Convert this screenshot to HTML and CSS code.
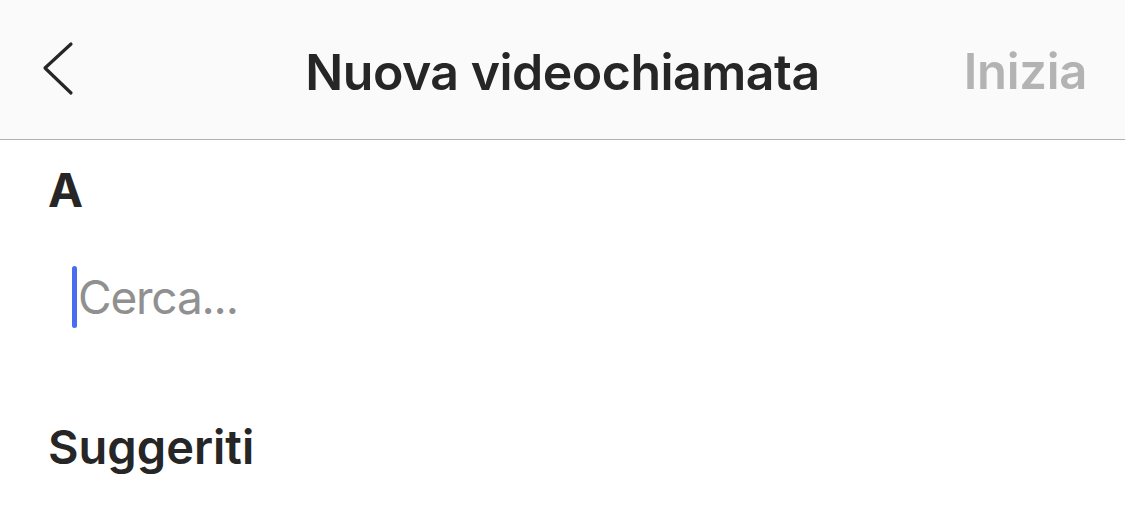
FILE: index.html
```html
<!DOCTYPE html>
<html lang="it">
<head>
    <meta charset="UTF-8">
    <meta name="viewport" content="width=device-width, initial-scale=1.0">
    <title>Nuova videochiamata</title>
    <link rel="stylesheet" href="styles.css">
</head>
<body>
    <header class="topbar">
        <button class="back" aria-label="Indietro">
            <svg width="36" height="56" viewBox="0 0 36 56">
                <path d="M30 3 L4 27 L30 52" fill="none" stroke="#262626" stroke-width="3.2" stroke-linecap="round" stroke-linejoin="round"/>
            </svg>
        </button>
        <h1 class="title">Nuova videochiamata</h1>
        <span class="start">Inizia</span>
    </header>
    <main class="content">
        <div class="label">A</div>
        <div class="search">
            <span class="caret"></span>
            <span class="placeholder">Cerca...</span>
        </div>
        <h2 class="section">Suggeriti</h2>
    </main>
</body>
</html>
```

FILE: styles.css
```css
body {
    margin: 0;
    background: #fff;
    font-family: Inter, "Noto Sans", sans-serif;
    color: #262626;
}
.topbar {
    height: 140px;
    background: #fafafa;
    border-bottom: 1px solid #b2b2b2;
    display: flex;
    align-items: center;
    justify-content: space-between;
    padding: 4px 38px 0 41px;
    box-sizing: border-box;
    position: relative;
}
.back {
    background: none;
    border: none;
    padding: 0;
    margin-top: -6px;
    display: flex;
}
.title {
    position: absolute;
    left: 0;
    right: 0;
    text-align: center;
    margin: 0;
    font-size: 50px;
    font-weight: 600;
    letter-spacing: -0.5px;
    pointer-events: none;
}
.start {
    font-size: 49px;
    font-weight: 600;
    color: #b3b3b3;
    letter-spacing: -0.3px;
}
.content {
    padding: 0 48px;
}
.label {
    font-size: 47px;
    font-weight: 700;
    margin-top: 21px;
    line-height: 58px;
}
.search {
    display: flex;
    align-items: center;
    margin-top: 47px;
    margin-left: 24px;
    height: 62px;
}
.caret {
    width: 5px;
    height: 62px;
    border-radius: 3px;
    background: #4a6cf0;
}
.placeholder {
    font-size: 46px;
    font-weight: 400;
    color: #909090;
    letter-spacing: -1.2px;
    margin-left: 1px;
}
.section {
    margin: 90px 0 0;
    font-size: 47px;
    font-weight: 600;
    line-height: 58px;
}
```
